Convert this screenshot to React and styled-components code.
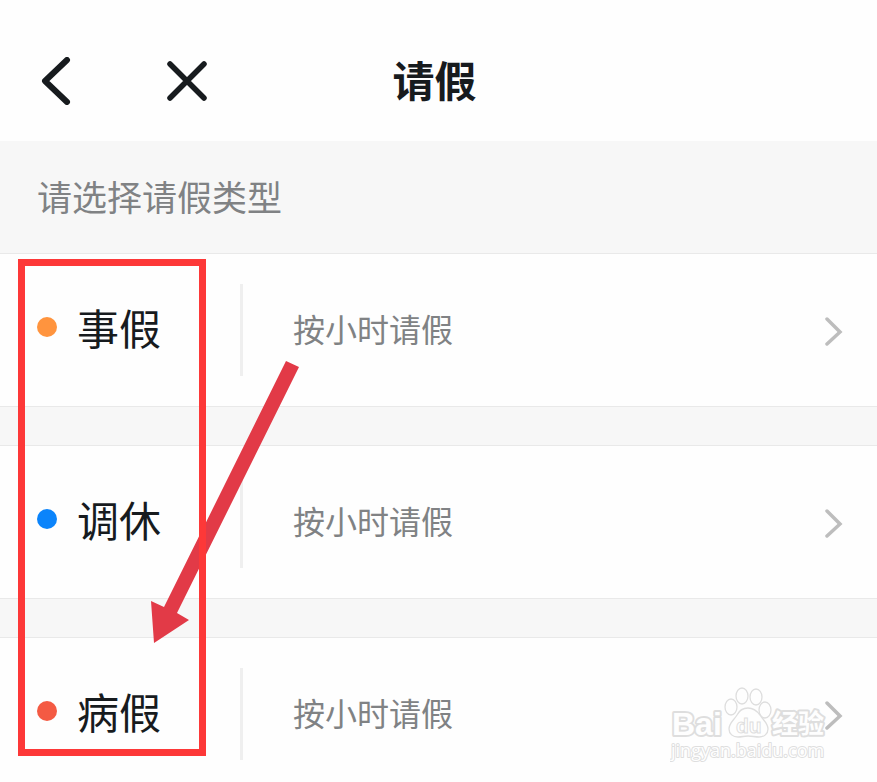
import React from 'react';
import styled, { createGlobalStyle } from "styled-components";

const GlobalStyle = createGlobalStyle`
* {
  box-sizing: border-box;
}
body {
  margin: 0;
  background: #fefefe;
  color: #171b1e;
  font-family: "Noto Sans CJK SC", sans-serif;
}
`

const Page = styled.main`
position: relative;
height: 100vh;
overflow: hidden;
`

const Header = styled.header`
display: grid;
grid-template-columns: 1fr auto 1fr;
align-items: center;
height: 141px;
padding: 20px 44px 0 36px;
`

const Actions = styled.nav`
display: flex;
gap: 82px;
`

const IconButton = styled.button`
display: flex;
padding: 0;
border: 0;
background: none;
color: inherit;
cursor: pointer;
`

const Title = styled.h1`
margin: 0;
padding-bottom: 4px;
font-size: 42px;
line-height: 60px;
font-weight: 700;
`

const Hint = styled.h2`
display: flex;
align-items: center;
margin: 0;
height: 113px;
padding: 0 37px 4px;
border-bottom: 1px solid #e9e9e9;
background: #f7f7f7;
color: #808284;
font-size: 35px;
font-weight: 400;
`

const List = styled.ul`
display: flex;
flex-direction: column;
gap: 40px;
margin: 0;
padding: 0;
list-style: none;
background: #f7f7f7;
`

const Item = styled.li`
background: #fefefe;
box-shadow: 0 0 0 1px #e9e9e9;
`

const Row = styled.button`
display: flex;
align-items: center;
width: 100%;
height: 152px;
padding: 0 34px 0 37px;
border: 0;
background: none;
color: inherit;
font: inherit;
text-align: left;
cursor: pointer;
`

const Type = styled.span`
display: flex;
align-items: center;
gap: 20px;
flex: 0 0 203px;
height: 92px;
padding-bottom: 7px;
font-size: 42px;
line-height: 60px;
`

const Dot = styled.span`
width: 20px;
height: 20px;
border-radius: 50%;
background: ${({ color }) => color};
`

const Unit = styled.span`
display: flex;
align-items: center;
flex: 1;
height: 92px;
padding: 0 0 4px 50px;
border-left: 3px solid #efefef;
color: #808284;
font-size: 32px;
`

const Frame = styled.div`
position: absolute;
top: 259px;
left: 18px;
width: 188px;
height: 497px;
border: 7px solid #fd3838;
pointer-events: none;
`

const Arrow = styled.svg`
position: absolute;
top: 361px;
left: 151px;
pointer-events: none;
`

const Watermark = styled.svg`
position: absolute;
top: 682px;
right: 43px;
pointer-events: none;
font-family: "Liberation Sans", "Noto Sans CJK SC", sans-serif;
`

const types = [
  { name: "事假", color: "#ff943e", unit: "按小时请假" },
  { name: "调休", color: "#0b84fb", unit: "按小时请假" },
  { name: "病假", color: "#f45a43", unit: "按小时请假" },
]

const BackIcon = () => (
  <svg width="48" height="48" viewBox="0 0 48 48" fill="none" stroke="currentColor" strokeWidth="6" strokeLinecap="round" strokeLinejoin="round">
    <path d="M31 3 9 24l22 21" />
  </svg>
)

const CloseIcon = () => (
  <svg width="42" height="48" viewBox="0 0 42 48" fill="none" stroke="currentColor" strokeWidth="5.5" strokeLinecap="round">
    <path d="M4 7l34 34M38 7 4 41" />
  </svg>
)

const Chevron = () => (
  <svg width="20" height="32" viewBox="0 0 20 32" fill="none" stroke="#bdbdbd" strokeWidth="3.5" strokeLinecap="round">
    <path d="M4 5l13 13L4 30" />
  </svg>
)

const SiteMark = () => (
  <Watermark width="164" height="84" viewBox="0 0 164 84" fill="#fefefe" stroke="#dedede">
    <g strokeWidth="4" strokeLinejoin="round" paintOrder="stroke" fontWeight="700">
      <text x="2" y="53" fontSize="32">Bai</text>
      <text x="102" y="51" fontSize="26">经验</text>
    </g>
    <g strokeWidth="1.3">
      <ellipse cx="61" cy="25" rx="6" ry="8" />
      <ellipse cx="72" cy="14" rx="6" ry="8" />
      <ellipse cx="86" cy="15" rx="6" ry="8" />
      <ellipse cx="95" cy="28" rx="6" ry="8" />
      <path d="M78 26c-6 0-9 3-11 7-3 5-8 8-8 14 0 5 4 8 9 8 4 0 6-1 10-1s7 1 11 1c5 0 9-3 9-8 0-6-5-9-8-14-3-4-6-7-12-7z" />
    </g>
    <text x="66" y="51" fontSize="21" fontWeight="700" strokeWidth="1">du</text>
    <text x="1" y="75" fontSize="18" fontFamily="Open Sans" strokeWidth="2" strokeLinejoin="round" paintOrder="stroke">jingyan.baidu.com</text>
  </Watermark>
)

const App = () => {
  return (
    <Page>
      <GlobalStyle />
      <Header>
        <Actions>
          <IconButton aria-label="返回"><BackIcon /></IconButton>
          <IconButton aria-label="关闭"><CloseIcon /></IconButton>
        </Actions>
        <Title>请假</Title>
      </Header>
      <Hint>请选择请假类型</Hint>
      <List>
        {types.map((type) => (
          <Item key={type.name}>
            <Row>
              <Type>
                <Dot color={type.color} />
                {type.name}
              </Type>
              <Unit>{type.unit}</Unit>
              <Chevron />
            </Row>
          </Item>
        ))}
      </List>
      <Arrow width="150" height="284" viewBox="0 0 150 284" fill="#e23a47">
        <path d="M135 0l13 6L26 252l12 7L3 282 0 240l13 6z" />
      </Arrow>
      <Frame />
      <SiteMark />
    </Page>
  )
}

export default App
